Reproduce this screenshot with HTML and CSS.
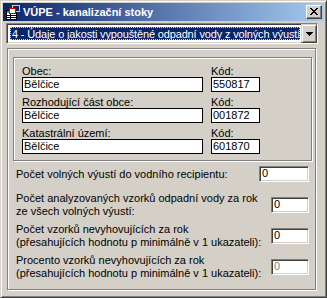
FILE: index.html
```html
<!DOCTYPE html>
<html>
  <head>
    <meta charset="utf-8">
    <title>VÚPE - kanalizační stoky</title>
    <link rel="stylesheet" href="styles.css">
  </head>
  <body>
    <div class="window">
      <div class="titlebar">
        <svg class="title-icon" width="16" height="16" viewBox="0 0 16 16" shape-rendering="crispEdges">
          <rect x="1" y="6" width="10" height="9" fill="#fff" stroke="#000" stroke-width="1"/>
          <rect x="1.5" y="6.5" width="9" height="2" fill="#808080"/>
          <path d="M1 11h10M1 13h10M5 9v6" stroke="#000" stroke-width="1"/>
          <rect x="7.5" y="1.5" width="7" height="6" fill="#0a246a" stroke="#ffd800"/>
          <rect x="4.5" y="4.5" width="6" height="5" fill="#fff" stroke="#e00000"/>
        </svg>
        <span class="title">VÚPE - kanalizační stoky</span>
        <span class="caption-btn">
          <svg width="8" height="7" viewBox="0 0 8 7" shape-rendering="crispEdges">
            <path d="M0 0h2v1h-2zM6 0h2v1h-2zM1 1h2v1h-2zM5 1h2v1h-2zM2 2h4v1h-4zM3 3h2v1h-2zM2 4h4v1h-4zM1 5h2v1h-2zM5 5h2v1h-2zM0 6h2v1h-2zM6 6h2v1h-2z" fill="#000"/>
          </svg>
        </span>
      </div>

      <div class="combo">
        <div class="combo-value"><span>4 - Údaje o jakosti vypouštěné odpadní vody z volných výustí</span></div>
        <div class="combo-btn">
          <svg width="7" height="4" viewBox="0 0 7 4" shape-rendering="crispEdges">
            <path d="M0 0h7v1h-7zM1 1h5v1h-5zM2 2h3v1h-3zM3 3h1v1h-1z" fill="#000"/>
          </svg>
        </div>
      </div>

      <div class="panel">
        <div class="group">
          <div class="field-row">
            <div class="field field-name">
              <div class="label">Obec:</div>
              <div class="edit">Bělčice</div>
            </div>
            <div class="field field-code">
              <div class="label">Kód:</div>
              <div class="edit">550817</div>
            </div>
          </div>
          <div class="field-row">
            <div class="field field-name">
              <div class="label">Rozhodující část obce:</div>
              <div class="edit">Bělčice</div>
            </div>
            <div class="field field-code">
              <div class="label">Kód:</div>
              <div class="edit">001872</div>
            </div>
          </div>
          <div class="field-row">
            <div class="field field-name">
              <div class="label">Katastrální území:</div>
              <div class="edit">Bělčice</div>
            </div>
            <div class="field field-code">
              <div class="label">Kód:</div>
              <div class="edit">601870</div>
            </div>
          </div>
        </div>

        <div class="stat stat-first">
          <div class="stat-text">Počet volných výustí do vodního recipientu:</div>
          <div class="sunken sunken-wide">0</div>
        </div>
        <div class="stat">
          <div class="stat-text">Počet analyzovaných vzorků odpadní vody za rok<br>ze všech volných výustí:</div>
          <div class="sunken">0</div>
        </div>
        <div class="stat">
          <div class="stat-text">Počet vzorků nevyhovujících za rok<br>(přesahujících hodnotu p minimálně v 1 ukazateli):</div>
          <div class="sunken">0</div>
        </div>
        <div class="stat">
          <div class="stat-text">Procento vzorků nevyhovujících za rok<br>(přesahujících hodnotu p minimálně v 1 ukazateli):</div>
          <div class="sunken disabled">0</div>
        </div>
      </div>
    </div>
  </body>
</html>
```

FILE: styles.css
```css
* {
  box-sizing: border-box;
  margin: 0;
  padding: 0;
}

html, body {
  width: 327px;
  height: 298px;
  overflow: hidden;
}

body {
  background: #d4d0c8;
  color: #000;
  font-family: "Liberation Sans", Arial, sans-serif;
  font-size: 11px;
  line-height: 13px;
}

.window {
  background: #d4d0c8;
  border: 1px solid;
  border-color: #d4d0c8 #404040 #404040 #d4d0c8;
  box-shadow: inset 1px 1px 0 #fff, inset -1px -1px 0 #808080;
  display: flex;
  flex-direction: column;
  height: 298px;
  padding: 2px;
  width: 327px;
}

.titlebar {
  align-items: center;
  background: linear-gradient(to right, #0a246a, #a6caf0);
  color: #fff;
  display: flex;
  flex: none;
  height: 18px;
  padding: 0 2px;
}

.title-icon {
  display: block;
  flex: none;
}

.title {
  flex: 1;
  font-weight: bold;
  margin-left: 2px;
  white-space: nowrap;
}

.caption-btn {
  align-items: center;
  background: #d4d0c8;
  border: 1px solid;
  border-color: #fff #404040 #404040 #fff;
  box-shadow: inset -1px -1px 0 #808080;
  display: flex;
  height: 14px;
  justify-content: center;
  padding: 0 1px 1px 0;
  width: 16px;
}

.caption-btn svg,
.combo-btn svg {
  display: block;
}

.combo {
  background: #fff;
  border: 1px solid;
  border-color: #808080 #fff #fff #808080;
  box-shadow: inset 1px 1px 0 #404040, inset -1px -1px 0 #d4d0c8;
  display: flex;
  flex: none;
  height: 21px;
  margin: 2px 6px 0 3px;
  padding: 2px;
}

.combo-value {
  background: #0a246a;
  border: 1px dotted #e8d890;
  color: #fff;
  flex: 1;
  margin: 1px;
  overflow: hidden;
  padding-left: 1px;
  white-space: nowrap;
}

.combo-value span {
  display: block;
  letter-spacing: -0.15px;
  line-height: 13px;
}

.combo-btn {
  align-items: center;
  background: #d4d0c8;
  border: 1px solid;
  border-color: #d4d0c8 #404040 #404040 #d4d0c8;
  box-shadow: inset 1px 1px 0 #fff, inset -1px -1px 0 #808080;
  display: flex;
  flex: none;
  justify-content: center;
  margin: -2px -2px -2px 0;
  width: 16px;
}

.panel {
  border: 1px solid #808080;
  box-shadow: inset 1px 1px 0 #fff, 1px 1px 0 #fff;
  display: flex;
  flex: 1;
  flex-direction: column;
  gap: 5px;
  margin: 4px 8px 5px 4px;
  padding: 8px 0 0 0;
}

.group {
  border: 1px solid #808080;
  box-shadow: inset 1px 1px 0 #fff, 1px 1px 0 #fff;
  display: flex;
  flex-direction: column;
  gap: 5px;
  margin: 0 3px 0 5px;
  padding: 8px 8px 6px 8px;
}

.field-row {
  display: flex;
  gap: 8px;
}

.label {
  line-height: 11px;
  white-space: nowrap;
}

.field-name {
  width: 181px;
}

.field-code {
  width: 49px;
}

.edit {
  background: #fff;
  border: 1px solid #000;
  height: 15px;
  line-height: 13px;
  padding-left: 1px;
  white-space: nowrap;
}

.stat {
  align-items: center;
  display: flex;
  justify-content: space-between;
  padding: 0 6px 0 8px;
}

.stat-first {
  margin-bottom: 5px;
}

.stat-text {
  white-space: nowrap;
}

.sunken {
  background: #fff;
  border: 1px solid;
  border-color: #808080 #fff #fff #808080;
  box-shadow: inset 1px 1px 0 #404040, inset -1px -1px 0 #d4d0c8;
  flex: none;
  height: 16px;
  line-height: 13px;
  padding-left: 2px;
  width: 38px;
}

.sunken-wide {
  width: 50px;
}

.disabled {
  color: #808080;
}
```
